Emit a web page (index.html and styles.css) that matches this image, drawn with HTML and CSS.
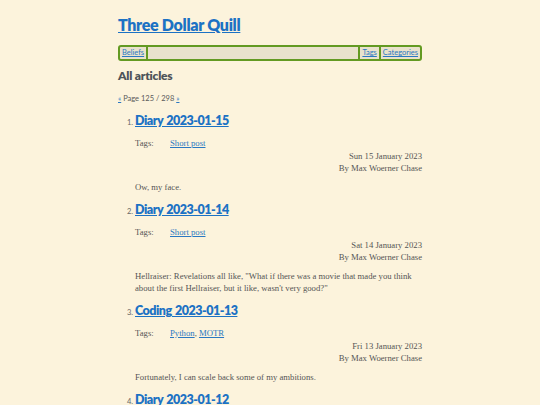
FILE: index.html
```html
<!DOCTYPE html>
<html lang="en">
<head>
  <meta charset="UTF-8">
  <meta name="viewport" content="width=device-width, initial-scale=1.0" />
  <title>All articles - Three Dollar Quill</title>
  <link rel="stylesheet" href="styles.css">
</head>
<body>
  <main class="page">
    <header class="site-header">
      <h1><a href="#">Three Dollar Quill</a></h1>
      <nav class="site-nav">
        <ul>
          <li><a href="#">Beliefs</a></li>
          <li class="spacer"></li>
          <li><a href="#">Tags</a></li>
          <li><a href="#">Categories</a></li>
        </ul>
      </nav>
    </header>

    <h2 class="section-title">All articles</h2>
    <p class="pager"><a href="#">«</a> Page 125 / 298 <a href="#">»</a></p>

    <ol class="articles">
      <li class="article">
        <h3><a href="#">Diary 2023-01-15</a></h3>
        <dl class="tags"><dt>Tags:</dt><dd><a href="#">Short post</a></dd></dl>
        <p class="meta">Sun 15 January 2023<br>By Max Woerner Chase</p>
        <p class="summary">Ow, my face.</p>
      </li>
      <li class="article">
        <h3><a href="#">Diary 2023-01-14</a></h3>
        <dl class="tags"><dt>Tags:</dt><dd><a href="#">Short post</a></dd></dl>
        <p class="meta">Sat 14 January 2023<br>By Max Woerner Chase</p>
        <p class="summary">Hellraiser: Revelations all like, "What if there was a movie that made you think about the first Hellraiser, but it like, wasn't very good?"</p>
      </li>
      <li class="article">
        <h3><a href="#">Coding 2023-01-13</a></h3>
        <dl class="tags"><dt>Tags:</dt><dd><a href="#">Python</a>, <a href="#">MOTR</a></dd></dl>
        <p class="meta">Fri 13 January 2023<br>By Max Woerner Chase</p>
        <p class="summary">Fortunately, I can scale back some of my ambitions.</p>
      </li>
      <li class="article">
        <h3><a href="#">Diary 2023-01-12</a></h3>
      </li>
    </ol>
  </main>
</body>
</html>
```

FILE: styles.css
```css
* {
  box-sizing: border-box;
  margin: 0;
  padding: 0;
}

body {
  background-color: #fcf3dc;
  color: #555;
  font-family: 'Liberation Serif', serif;
  font-size: 8.7px;
  line-height: 12px;
}

a {
  color: #2a78c2;
}

.page {
  width: 304px;
  margin: 0 auto;
  padding-top: 15px;
}

.site-header h1 {
  font-family: 'Lato', sans-serif;
  font-size: 16px;
  line-height: 20px;
  font-weight: 800;
  letter-spacing: -0.3px;
}

.site-header h1 a {
  color: #1c72c4;
}

.site-nav {
  margin-top: 10px;
  border: 2px solid #639a22;
  border-radius: 3px;
  background-color: #e9e2cc;
}

.site-nav ul {
  list-style: none;
  display: flex;
  font-family: 'Lato', sans-serif;
  font-size: 7.5px;
  line-height: 12px;
}

.site-nav li {
  padding: 0 2px;
}

.site-nav li + li {
  border-left: 2px solid #639a22;
}

.site-nav .spacer {
  flex: 1;
}

.section-title {
  margin-top: 7px;
  font-family: 'Lato', sans-serif;
  font-size: 12px;
  line-height: 16px;
  font-weight: 800;
  letter-spacing: -0.2px;
  color: #4d5359;
}

.pager {
  margin-top: 9px;
  font-family: 'Lato', sans-serif;
  font-size: 7.5px;
  color: #5a5a5a;
}

.articles {
  margin-top: 8px;
  padding-left: 17px;
}

.article::marker {
  font-family: 'Lato', sans-serif;
  font-size: 7.5px;
  color: #666;
}

.article + .article {
  margin-top: 9px;
}

.article h3 {
  font-family: 'Lato', sans-serif;
  font-size: 12.5px;
  line-height: 16px;
  font-weight: 800;
  letter-spacing: -0.5px;
  word-spacing: 1px;
}

.article h3 a {
  color: #1c72c4;
}

.tags {
  display: grid;
  grid-template-columns: 35px 1fr;
  margin-top: 8px;
}

.meta {
  margin-top: 1px;
  text-align: right;
}

.summary {
  margin-top: 7px;
}
```
